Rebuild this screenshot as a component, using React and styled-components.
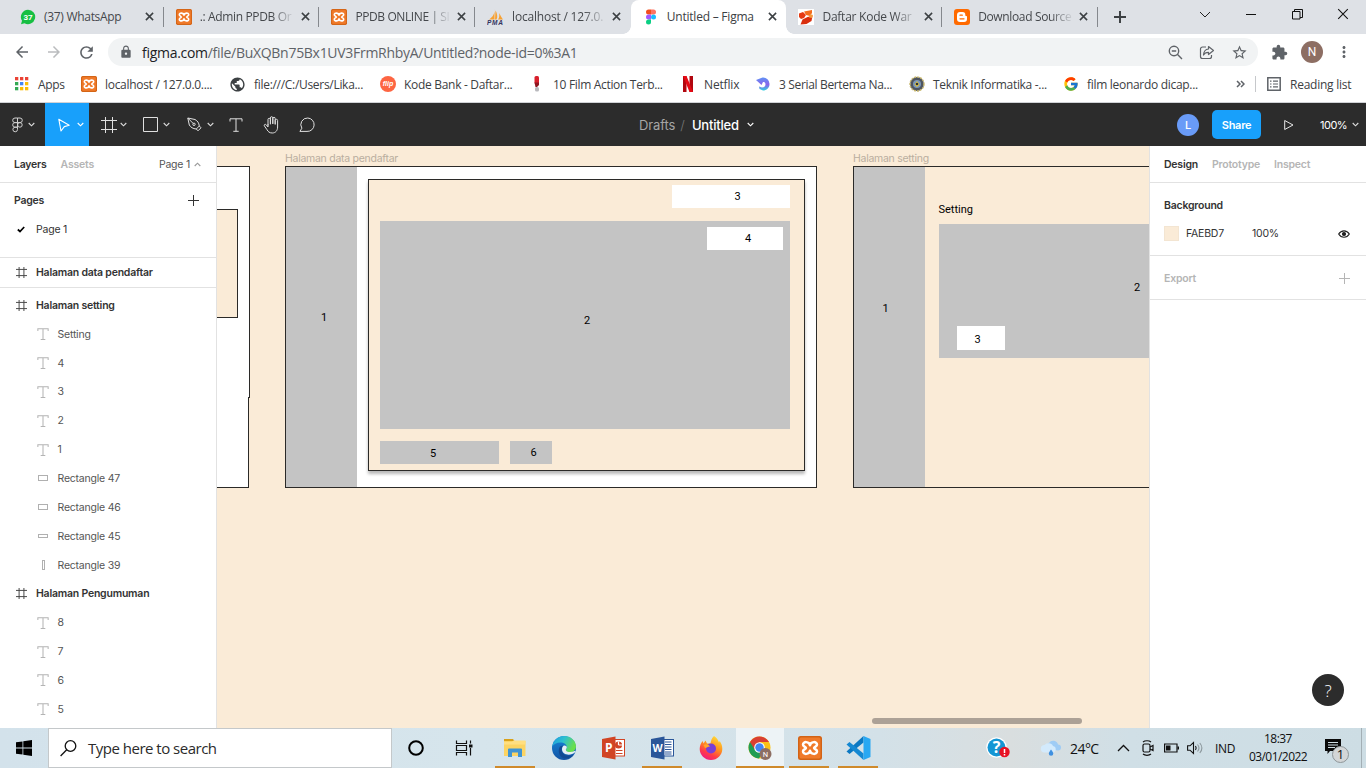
import React from "react";
import styled, { createGlobalStyle, css } from "styled-components";
import {
  MdArrowBack, MdArrowForward, MdRefresh, MdLock, MdStarBorder, MdExtension, MdMoreVert, MdPublic,
} from "react-icons/md";
import { FcGoogle } from "react-icons/fc";

const segoe = '"Open Sans", "Noto Sans", sans-serif';
const inter = 'Inter, "Liberation Sans", sans-serif';

const GlobalStyle = createGlobalStyle`
  * { box-sizing: border-box; }
  body { margin: 0; overflow: hidden; background: #fff; }
  svg { display: block; flex: none; }
`;

const Screen = styled.div`
  width: 1366px;
  height: 768px;
  display: flex;
  flex-direction: column;
  overflow: hidden;
  font-family: ${segoe};
  color: #3c4043;
`;

const Text = styled.span`
  white-space: nowrap;
  letter-spacing: ${(p) => p.$ls || 0}px;
`;

/* ---------- browser tabs ---------- */
const TabStrip = styled.div`
  height: 34px;
  flex: none;
  display: flex;
  background: #dee1e6;
  padding-left: 8px;
`;

const TabBox = styled.div`
  position: relative;
  width: 155.7px;
  flex: none;
  display: flex;
  align-items: center;
  padding: 0 6px 1px 12px;
  font-size: 12px;
  color: #45484c;
  ${(p) =>
    p.$active
      ? css`
          background: #fff;
          border-radius: 8px 8px 0 0;
          color: #3c4043;
          &::before, &::after {
            content: "";
            position: absolute;
            bottom: 0;
            width: 8px;
            height: 8px;
          }
          &::before { left: -8px; background: radial-gradient(circle at 0 0, #dee1e6 7.5px, #fff 8px); }
          &::after { right: -8px; background: radial-gradient(circle at 100% 0, #dee1e6 7.5px, #fff 8px); }
        `
      : ""}
`;

const TabTitle = styled.div`
  flex: 1;
  min-width: 0;
  margin-left: 8px;
  white-space: nowrap;
  letter-spacing: ${(p) => p.$ls}px;
  ${(p) => p.$fade && css`mask-image: linear-gradient(90deg, #000 76%, rgba(0, 0, 0, 0.12) 98%);`}
`;

const TabClose = styled.div`
  width: 16px;
  margin-left: 3px;
  display: flex;
  justify-content: center;
`;

const TabDivider = styled.div`
  width: 1px;
  height: 20px;
  margin: 7px 0 0 -1px;
  background: #85888d;
  flex: none;
`;

const NewTab = styled.div`
  width: 44px;
  display: flex;
  align-items: center;
  justify-content: center;
`;

const WindowButtons = styled.div`
  margin-left: auto;
  display: flex;
  align-items: center;
  height: 28px;
`;

const WindowButton = styled.div`
  width: 46px;
  display: flex;
  justify-content: center;
`;

/* ---------- address row ---------- */
const AddressRow = styled.div`
  height: 36px;
  flex: none;
  display: flex;
  align-items: center;
  background: #fff;
  padding: 0 12px 0 13px;
  color: #5f6368;
`;

const NavButton = styled.div`
  width: ${(p) => p.$w || 32}px;
  color: ${(p) => (p.$muted ? "#babcbe" : "#5f6368")};
`;

const UrlBar = styled.div`
  width: 1150px;
  height: 28px;
  border-radius: 14px;
  background: #f1f3f4;
  display: flex;
  align-items: center;
  padding: 0 10px 0 11px;
  font-size: 14px;
`;

const Url = styled.div`
  flex: 1;
  margin-left: 9px;
  color: #5f6368;
  letter-spacing: -0.29px;
  white-space: nowrap;
  b { font-weight: 400; color: #202124; }
`;

const UrlActions = styled.div`
  display: flex;
  gap: 16px;
  align-items: center;
`;

const ExtensionButton = styled.div`
  width: 43px;
  padding-left: 13px;
`;

const MenuDots = styled.div`
  margin-left: 12px;
`;

const Avatar = styled.div`
  width: 22px;
  height: 22px;
  border-radius: 50%;
  display: flex;
  align-items: center;
  justify-content: center;
  background: ${(p) => p.$bg};
  color: #fff;
  font: ${(p) => p.$weight || 400} ${(p) => p.$size || 12}px ${(p) => p.$font || "Roboto, sans-serif"};
`;

/* ---------- bookmarks ---------- */
const BookmarkRow = styled.div`
  height: 33px;
  flex: none;
  display: flex;
  align-items: center;
  background: #fff;
  border-bottom: 1px solid #d0d2d6;
  padding: 0 0 4px 14px;
  font-size: 12px;
`;

const BookmarkItem = styled.div`
  width: ${(p) => p.$w}px;
  flex: none;
  display: flex;
  align-items: center;
  gap: ${(p) => p.$gap || 8}px;
`;

const RowDivider = styled.div`
  width: 1px;
  height: 16px;
  background: #c6c8cb;
  margin: 0 11px 0 10px;
`;

/* ---------- editor toolbar ---------- */
const Toolbar = styled.div`
  height: 43px;
  flex: none;
  display: flex;
  align-items: center;
  background: #2c2c2c;
  font-family: ${inter};
  color: #fff;
`;

const Tool = styled.div`
  width: ${(p) => p.$w}px;
  height: 43px;
  flex: none;
  display: flex;
  align-items: center;
  padding-left: ${(p) => p.$pad}px;
  gap: ${(p) => p.$gap || 7}px;
  background: ${(p) => (p.$active ? "#18a0fb" : "transparent")};
`;

const DocTitle = styled.div`
  display: flex;
  align-items: center;
  width: 538px;
  font-size: 13px;
  color: #a5a5a5;
`;

const DocName = styled.span`
  color: #fff;
  font-weight: 500;
  margin-right: 8px;
  letter-spacing: -0.2px;
`;

const Slash = styled.span`
  color: #777;
  margin: 0 7px 0 5px;
  font-weight: 300;
`;

const ShareButton = styled.div`
  width: 49px;
  height: 29px;
  margin: 0 23px 0 13px;
  border-radius: 5px;
  background: #18a0fb;
  display: flex;
  align-items: center;
  justify-content: center;
  font-size: 11px;
  font-weight: 600;
  letter-spacing: -0.3px;
`;

const ZoomLevel = styled.div`
  display: flex;
  align-items: center;
  gap: 5px;
  margin-left: 26px;
  font-size: 11px;
  letter-spacing: -0.5px;
`;

/* ---------- work area ---------- */
const Workspace = styled.div`
  height: 582px;
  flex: none;
  display: flex;
  font-family: ${inter};
  font-size: 10.5px;
  letter-spacing: -0.22px;
  color: #333;
`;

const LeftPanel = styled.div`
  width: 217px;
  flex: none;
  background: #fff;
  border-right: 1px solid #e2e2e2;
  overflow: hidden;
`;

const PanelTabs = styled.div`
  height: 37px;
  border-bottom: 1px solid #e2e2e2;
  display: flex;
  align-items: center;
  gap: 14px;
  padding: 0 15px 0 14px;
`;

const PanelTab = styled.div`
  font-weight: 600;
  color: ${(p) => (p.$on ? "#333" : "#b5b5b5")};
`;

const PageChoice = styled.div`
  margin-left: auto;
  display: flex;
  align-items: center;
  gap: 4px;
  color: #555;
`;

const PagesSection = styled.div`
  height: 75px;
  border-bottom: 1px solid #e2e2e2;
  padding: 5px 17px 0 14px;
`;

const SectionHead = styled.div`
  height: 24px;
  display: flex;
  align-items: center;
  justify-content: space-between;
  font-weight: 600;
  color: ${(p) => (p.$muted ? "#b5b5b5" : "#333")};
`;

const PageRow = styled.div`
  height: 34px;
  display: flex;
  align-items: center;
  gap: 11px;
  padding-left: 3px;
`;

const StickyFrame = styled.div`
  height: 30px;
  border-bottom: 1px solid #e2e2e2;
  margin-bottom: 3px;
`;

const LayerRow = styled.div`
  height: ${(p) => p.$h || 28.85}px;
  display: flex;
  align-items: center;
  padding-left: ${(p) => (p.$frame ? 16 : 37)}px;
  gap: ${(p) => (p.$frame ? 9 : 8.5)}px;
  font-weight: ${(p) => (p.$frame ? 600 : 400)};
  color: ${(p) => (p.$frame ? "#333" : "#555")};
`;

const Canvas = styled.div`
  position: relative;
  width: 932px;
  flex: none;
  background: #faebd7;
  overflow: hidden;
  font-family: Roboto, sans-serif;
  letter-spacing: 0;
`;

const Shape = styled.div`
  position: absolute;
  left: ${(p) => p.$x}px;
  top: ${(p) => p.$y}px;
  width: ${(p) => p.$w}px;
  height: ${(p) => p.$h}px;
  background: ${(p) => p.$fill};
  ${(p) => p.$line && css`border: 1px solid #2b2a28;`}
  ${(p) => p.$shadow && css`box-shadow: 0 3px 3px rgba(0, 0, 0, 0.28);`}
`;

const CanvasText = styled.div`
  position: absolute;
  left: ${(p) => p.$x}px;
  top: ${(p) => p.$y}px;
  line-height: 14px;
  font-size: 11px;
  color: #000;
  white-space: nowrap;
`;

const FrameLabel = styled(CanvasText)`
  font-family: ${inter};
  font-size: 10.5px;
  letter-spacing: -0.27px;
  color: #b9ae9f;
`;

const ScrollThumb = styled.div`
  position: absolute;
  left: 655px;
  top: 572px;
  width: 210px;
  height: 6px;
  border-radius: 3px;
  background: #aca196;
`;

const RightPanel = styled.div`
  position: relative;
  flex: 1;
  background: #fff;
  border-left: 1px solid #e2e2e2;
`;

const PropSection = styled.div`
  height: ${(p) => p.$h}px;
  border-bottom: 1px solid #e2e2e2;
  padding: 10px 16px 0 14px;
`;

const FillRow = styled.div`
  height: 33px;
  display: flex;
  align-items: center;
`;

const Swatch = styled.div`
  width: 15px;
  height: 15px;
  background: #faebd7;
  border: 1px solid #f3e5d2;
  margin-right: 7px;
`;

const HexValue = styled.div`
  width: 66px;
`;

const FillAlpha = styled.div`
  flex: 1;
`;

const HelpButton = styled.div`
  position: absolute;
  right: 22px;
  bottom: 22px;
  width: 32px;
  height: 32px;
  border-radius: 50%;
  background: #2c2c2c;
  display: flex;
  align-items: center;
  justify-content: center;
  color: #fff;
  font-family: "Open Sans", sans-serif;
  font-size: 17px;
  font-weight: 300;
`;

/* ---------- taskbar ---------- */
const Taskbar = styled.div`
  height: 40px;
  flex: none;
  display: flex;
  background: linear-gradient(90deg, #d3e2eb 0, #d6e5ec 480px, #d3e1e8 880px, #d9dedf 1010px, #d0dfe6 1130px, #cddde4 100%);
  color: #101010;
`;

const StartButton = styled.div`
  width: 48px;
  display: flex;
  align-items: center;
  justify-content: center;
`;

const SearchBox = styled.div`
  width: 344px;
  border: 1px solid #c4c8ca;
  background: #fff;
  display: flex;
  align-items: center;
  padding-left: 11px;
  gap: 11px;
  font-size: 15px;
  color: #2b2b2b;
`;

const TaskCell = styled.div`
  width: ${(p) => p.$w || 49}px;
  height: 40px;
  margin-right: ${(p) => p.$mr || 0}px;
  display: flex;
  align-items: center;
  justify-content: center;
  background: ${(p) => (p.$focus ? "#edf3f6" : "transparent")};
  position: relative;
  &::after {
    content: "";
    position: absolute;
    bottom: 0;
    left: ${(p) => (p.$focus ? 0 : 4)}px;
    right: ${(p) => (p.$focus ? 0 : 5)}px;
    height: 2px;
    background: ${(p) => (p.$open ? "#cf8a2b" : "transparent")};
  }
`;

const Tray = styled.div`
  margin-left: auto;
  display: flex;
  align-items: center;
  font-size: 12px;
`;

const TraySlot = styled.div`
  width: ${(p) => p.$w}px;
  display: flex;
  align-items: center;
  font-size: ${(p) => p.$fs || 12}px;
`;

const Clock = styled.div`
  width: 62px;
  text-align: center;
  line-height: 18px;
  letter-spacing: -0.55px;
  white-space: nowrap;
`;

const NoticeSlot = styled.div`
  width: 52px;
  padding: 6px 0 0 16px;
`;

const ShowDesktop = styled.div`
  width: 5px;
  height: 40px;
  border-left: 1px solid #a3afb5;
`;

/* ---------- drawings ---------- */
const Cross = ({ s = 9, w = 1.7, c = "#3c4043" }) => (
  <svg width={s} height={s} viewBox="0 0 10 10" stroke={c} strokeWidth={w}>
    <path d="M1 1l8 8M9 1l-8 8" />
  </svg>
);

const Plus = ({ s = 11, w = 1, c = "#333" }) => (
  <svg width={s} height={s} viewBox="0 0 11 11" stroke={c} strokeWidth={w}>
    <path d="M5.5 0v11M0 5.5h11" />
  </svg>
);

const Chevron = ({ c = "#ddd", up }) => (
  <svg width="7" height="5" viewBox="0 0 7 5" fill="none" stroke={c} strokeWidth="1.1">
    <path d={up ? "M.7 4L3.5 1.2 6.3 4" : "M.7 1L3.5 3.8 6.3 1"} />
  </svg>
);

const Xampp = ({ s = 16 }) => (
  <svg width={s} height={s} viewBox="0 0 24 24">
    <rect width="24" height="24" rx="2.5" fill="#d9641a" />
    <rect x="1" y="1" width="22" height="22" rx="2" fill="#f07a2a" stroke="#c9600f" strokeWidth=".8" />
    <path
      d="M12 9.300C11.500 5.500 5 4.800 5 8.800c0 1.800 2.400 1.800 2.900 3.200C7.400 13.400 5 13.400 5 15.200c0 4 6.500 3.300 7-.5c.5 3.800 7 4.500 7 .5c0-1.800-2.400-1.800-2.900-3.200c.5-1.400 2.900-1.400 2.900-3.200c0-4-6.500-3.300-7 .5z"
      fill="none" stroke="#fff" strokeWidth="2.500" strokeLinejoin="round"
    />
  </svg>
);

const WhatsApp = () => (
  <svg width="16" height="16" viewBox="0 0 16 16">
    <path d="M8 .8a7.200 7.200 0 1 1-3.500 13.500L1 15.200l1-3.400A7.200 7.200 0 0 1 8 .8z" fill="#17bf43" />
    <text x="8" y="10.900" fontSize="8" fontWeight="700" fill="#fff" textAnchor="middle" fontFamily="Roboto">37</text>
  </svg>
);

const Pma = () => (
  <svg width="17" height="16" viewBox="0 0 17 16">
    <path d="M7.500 0C8 4 6 8 2 10.500h5.500zM8.500 1.500C10 4 11 8 9.500 10.500H8zM12 4c1.500 2.500 3 5 4 6.500h-5c1.500-2 1.500-4.500 1-6.500z" fill="#f7a133" />
    <text x="0" y="15.800" fontSize="6.500" fontWeight="700" fontStyle="italic" fill="#33335e" fontFamily="Liberation Sans" textLength="16">PMA</text>
  </svg>
);

const FigmaColor = () => (
  <svg width="16" height="16" viewBox="0 0 16 16">
    <path d="M5.500.5H8v5H5.500a2.500 2.500 0 0 1 0-5z" fill="#f24e1e" />
    <path d="M8 .5h2.500a2.500 2.500 0 0 1 0 5H8z" fill="#ff7262" />
    <path d="M5.500 5.500H8v5H5.500a2.500 2.500 0 0 1 0-5z" fill="#a259ff" />
    <circle cx="10.500" cy="8" r="2.500" fill="#1abcfe" />
    <path d="M5.500 10.500H8V13a2.500 2.500 0 1 1-2.500-2.500z" fill="#0acf83" />
  </svg>
);

const Slides = () => (
  <svg width="16" height="16" viewBox="0 0 16 16">
    <rect width="16" height="16" fill="#fff" />
    <path d="M1 4.500l4-1.500 3 3-2 3-3 1-2-2z" fill="#e63a12" />
    <path d="M6 2.500L14 1v3l-2 3-4-1z" fill="#f36c1d" />
    <path d="M4.500 10.500l5-2.500 5-1-1 5-5 3-6 .5z" fill="#d92e0d" />
    <path d="M12 5l3 1-1 3-3-.5z" fill="#f59a3d" />
  </svg>
);

const Blogger = () => (
  <svg width="16" height="16" viewBox="0 0 16 16">
    <rect width="16" height="16" rx="3" fill="#ff6a00" />
    <path d="M6 3h2.500A2.800 2.800 0 0 1 11.300 6c0 .8.300 1 1 1 .5 0 .7.300.7.700V10a3 3 0 0 1-3 3H6a3 3 0 0 1-3-3V6a3 3 0 0 1 3-3z" fill="#fff" />
    <path d="M6 6.200h2.300M6 9.800h4" stroke="#ff6a00" strokeWidth="1.300" strokeLinecap="round" />
  </svg>
);

const AppsGrid = () => (
  <svg width="16" height="16" viewBox="0 0 16 16">
    {["#ea4335", "#ea4335", "#ea4335", "#34a853", "#4285f4", "#fbbc04", "#34a853", "#fbbc04", "#fbbc04"].map((c, i) => (
      <rect key={i} x={1 + (i % 3) * 5} y={1 + Math.floor(i / 3) * 5} width="3.300" height="3.300" fill={c} />
    ))}
  </svg>
);

const Flip = () => (
  <svg width="16" height="16" viewBox="0 0 16 16">
    <circle cx="8" cy="8" r="8" fill="#fd6542" />
    <text x="8" y="10.300" fontSize="7" fontStyle="italic" fontWeight="700" fill="#fff" textAnchor="middle" fontFamily="Liberation Sans">flip</text>
  </svg>
);

const Exclaim = () => (
  <svg width="16" height="16" viewBox="0 0 16 16">
    <rect x="5.500" y="0" width="4.500" height="8" rx="1.500" fill="#d8202c" />
    <path d="M5.500 6.500H10V9L8 11H6.500z" fill="#8e1620" />
    <rect x="6" y="11" width="4" height="4.500" rx="1.500" fill="#b9b9bd" />
  </svg>
);

const Netflix = () => (
  <svg width="16" height="16" viewBox="0 0 16 16">
    <path d="M3 0h3.500v16H3zM9.500 0H13v16H9.500z" fill="#b1060f" />
    <path d="M3 0h3.500L13 16H9.500z" fill="#e50914" />
  </svg>
);

const Swirl = () => (
  <svg width="16" height="16" viewBox="0 0 16 16">
    <defs>
      <linearGradient id="swirl" x1="0" y1="0" x2="0" y2="1">
        <stop offset="0" stopColor="#5f93f5" />
        <stop offset=".55" stopColor="#8a63ea" />
        <stop offset="1" stopColor="#31cfe0" />
      </linearGradient>
    </defs>
    <path d="M1 4L7.500 1.500A6.300 6.300 0 0 1 14.500 8c0 4-3 6.500-6.500 6.500L4.500 13 4 10.500l3 1c2.500 0 3.500-1.500 3.500-3.200S9.500 6 8 6L6.500 9z" fill="url(#swirl)" />
  </svg>
);

const Seal = () => (
  <svg width="16" height="16" viewBox="0 0 16 16">
    <circle cx="8" cy="8" r="7" fill="#4e5560" stroke="#c9b76b" strokeWidth="1.400" strokeDasharray="2 1" />
    <circle cx="8" cy="8" r="4" fill="#7a96b8" />
    <path d="M5.500 8.500L8 5l2.500 3.500L8 11z" fill="#e2c33b" />
    <circle cx="8" cy="8" r="1.300" fill="#2d3238" />
  </svg>
);

const ReadingList = () => (
  <svg width="14" height="14" viewBox="0 0 14 14" fill="none" stroke="#5f6368" strokeWidth="1.500">
    <path d="M.8.8h12.400v12.400H.8z" />
    <path d="M3 4.200h1.500M3 7h1.500M3 9.800h1.500M6 4.200h5M6 7h5M6 9.800h5" strokeWidth="1.200" />
  </svg>
);

const ZoomOut = () => (
  <svg width="15" height="15" viewBox="0 0 15 15" fill="none" stroke="#5f6368" strokeWidth="1.400">
    <circle cx="6" cy="6" r="4.700" /><path d="M9.300 9.300L14 14M3.800 6h4.400" />
  </svg>
);

const ShareArrow = () => (
  <svg width="16" height="15" viewBox="0 0 16 15" fill="none" stroke="#5f6368" strokeWidth="1.200">
    <path d="M7 2H3.500A2 2 0 0 0 1.500 4v7.500a2 2 0 0 0 2 2h7a2 2 0 0 0 2-2V10" />
    <path d="M9.500 1.500L14.500 5.500 9.500 9.500V7.300C7 7.300 5.500 8 4.500 10c.2-3.500 2-5.700 5-6z" strokeLinejoin="round" />
  </svg>
);

const FigmaOutline = () => (
  <svg width="11" height="16" viewBox="0 0 11 16" fill="none" stroke="#cfcfcf" strokeWidth="1">
    <path d="M5.500 1H3a2.300 2.300 0 0 0 0 4.600h2.500zM5.500 1H8a2.300 2.300 0 0 1 0 4.600H5.500zM5.500 5.600H3a2.300 2.300 0 0 0 0 4.600h2.500zM5.500 10.200H3a2.300 2.300 0 1 0 2.500 2.300z" />
    <circle cx="7.900" cy="7.900" r="2.300" />
  </svg>
);

const Cursor = () => (
  <svg width="12" height="14" viewBox="0 0 12 14" fill="none" stroke="#fff" strokeWidth="1.100" strokeLinejoin="round">
    <path d="M.8 1.200l10.400 6L6.300 8.600 3 13z" />
  </svg>
);

const FrameIcon = ({ s = 16, c = "#e0e0e0", w = 1 }) => (
  <svg width={s} height={s} viewBox="0 0 16 16" stroke={c} strokeWidth={w}>
    <path d="M4.500 0v16M11.500 0v16M0 3.500h16M0 12.500h16" />
  </svg>
);

const Pen = () => (
  <svg width="15" height="15" viewBox="0 0 15 15" fill="none" stroke="#e0e0e0" strokeWidth="1" strokeLinejoin="round">
    <path d="M.8 1L8 2.500C10.500 3.800 12 6 12.300 9L9.300 12C6 11.800 3.500 10.200 2.300 8z" />
    <path d="M.8 1l5.400 5.500M12.300 9l1.700 1.800-3 3L9.300 12" /><circle cx="7" cy="7.300" r="1.200" />
  </svg>
);

const TypeIcon = ({ s = 14, c = "#e0e0e0", w = 1 }) => (
  <svg width={s} height={s} viewBox="0 0 14 14" fill="none" stroke={c} strokeWidth={w}>
    <path d="M1 3.500V.8h12v2.700M7 .8v12.500M4.300 13.300h5.400" />
  </svg>
);

const Hand = () => (
  <svg width="17" height="18" viewBox="0 0 17 18" fill="none" stroke="#e0e0e0" strokeWidth="1" strokeLinecap="round" strokeLinejoin="round">
    <path d="M5 9V3.500a1.200 1.200 0 0 1 2.400 0V8M7.400 7.500V1.900a1.200 1.200 0 0 1 2.400 0V7.500M9.800 7.500V2.500a1.200 1.200 0 0 1 2.400 0V8M12.200 8V4.500a1.200 1.200 0 0 1 2.400 0v6.500c0 3.500-2 6-5.300 6-3 0-4.300-1.500-5.300-3.300L1.300 9.800c-.6-1.200 1-2 1.900-1L5 11V8.500" />
  </svg>
);

const Comment = () => (
  <svg width="16" height="16" viewBox="0 0 16 16" fill="none" stroke="#e0e0e0" strokeWidth="1">
    <path d="M8.800 1a6.600 6.600 0 1 1-.8 13.400H.9l2-3.200A6.600 6.600 0 0 1 8.800 1z" strokeLinejoin="round" />
  </svg>
);

const glyphRects = {
  wide: [1.5, 3.5, 9, 5],
  slim: [1.5, 4.5, 9, 3],
  tall: [5.5, 1.5, 2, 9],
};

const LayerGlyph = ({ kind }) => {
  if (kind === "T") return <TypeIcon s={12} c="#b4b4b4" w={1.2} />;
  const [x, y, w, h] = glyphRects[kind];
  return (
    <svg width="12" height="12" viewBox="0 0 12 12" fill="none" stroke="#b0b0b0">
      <rect x={x} y={y} width={w} height={h} />
    </svg>
  );
};

const Eye = () => (
  <svg width="12" height="10" viewBox="0 0 12 10" fill="none" stroke="#222" strokeWidth="1.200">
    <path d="M.7 5C3.200.7 8.800.7 11.300 5 8.800 9.300 3.200 9.300.7 5z" /><circle cx="6" cy="5" r="1.500" fill="#222" />
  </svg>
);

const WinLogo = () => (
  <svg width="16" height="16" viewBox="0 0 16 16" fill="#000">
    <path d="M0 2.300L6.500 1.400V7.600H0zM7.300 1.300L16 0V7.600H7.300zM0 8.400h6.500v6.200L0 13.700zM7.300 8.400H16V16L7.300 14.700z" />
  </svg>
);

const Explorer = () => (
  <svg width="22" height="20" viewBox="0 0 22 20">
    <path d="M0 1h9l1.500 2H0z" fill="#d9a11a" />
    <path d="M0 3h21.500v15H0z" fill="#fcd462" />
    <path d="M0 4h8l1.500-1.500H21.500v4H0z" fill="#ffdf81" />
    <path d="M4 19v-7.500a1 1 0 0 1 1-1h12a1 1 0 0 1 1 1V19h-4v-4.500H8V19z" fill="#3f94d3" />
  </svg>
);

const Edge = () => (
  <svg width="24" height="24" viewBox="0 0 24 24">
    <defs>
      <linearGradient id="edgeTop" x1="0" y1="0" x2="1" y2=".4">
        <stop offset="0" stopColor="#1a9be0" /><stop offset=".5" stopColor="#2fc0cf" /><stop offset="1" stopColor="#6adf4c" />
      </linearGradient>
      <linearGradient id="edgeLow" x1="0" y1="0" x2="0" y2="1">
        <stop offset="0" stopColor="#1687d9" /><stop offset="1" stopColor="#1253a4" />
      </linearGradient>
    </defs>
    <circle cx="12" cy="12" r="12" fill="url(#edgeLow)" />
    <path d="M.2 10.500C1.500 4 6.500 0 12.200 0 19 0 24 5 24 10.500c0 3.500-2.800 5.800-6.200 5.800-3 0-4.300-1-4.300-2 0-.8 1.300-1.300 1.300-3.200C14.800 8.500 12 6.500 8.500 6.500 4.500 6.500 1.500 8.500.2 10.500z" fill="url(#edgeTop)" />
    <path d="M8 10.500c-2.500 4-1 9.500 3 11.500 3.500 1.500 8 0 10.500-3.500-4 2-8.500 1.500-10.700-1.300C9 15 9.500 11.500 11 9.500z" fill="#124a93" />
    <path d="M11.300 10c-1.800 1.800-1.800 5.300.7 7.300 3 2.200 8 2 11.300-1.300.6-.5-.2-1.200-.8-.9-3.500 1.800-8.900 1-8.700-1.300.3-1 1.100-1.500 1-2.500-.1-1.200-2-2.400-3.500-1.300z" fill="#e6eff4" />
  </svg>
);

const OfficeIcon = ({ c, letter }) => (
  <svg width="23" height="24" viewBox="0 0 23 24">
    <rect x="11" y="3.500" width="11.500" height="16.500" fill="#fff" stroke={c} strokeWidth="1" />
    {letter === "W" ? (
      <path d="M14 6h6.500M14 8.500h6.500M14 11h6.500M14 13.500h6.500M14 16h6.500M14 18h6.500" stroke={c} strokeWidth="1.200" />
    ) : (
      <g stroke={c} strokeWidth="1.200" fill="none">
        <circle cx="16.500" cy="9" r="3" fill={c} /><path d="M16.500 9V5.500M16.500 9h4" stroke="#fff" /><path d="M14 14.500h6.500M14 17.500h6.500" />
      </g>
    )}
    <path d="M0 3L13.500.5v23L0 21z" fill={c} />
    <text x="6.700" y="16" fontSize={letter === "W" ? 10.5 : 12} fontWeight="700" fill="#fff" textAnchor="middle" fontFamily="Open Sans">{letter}</text>
  </svg>
);

const Firefox = () => (
  <svg width="24" height="24" viewBox="0 0 24 24">
    <defs>
      <linearGradient id="fox" x1=".8" y1="0" x2=".3" y2="1">
        <stop offset="0" stopColor="#ffe13a" /><stop offset=".45" stopColor="#ff8f1e" /><stop offset=".75" stopColor="#ff3a4a" /><stop offset="1" stopColor="#ee1a80" />
      </linearGradient>
    </defs>
    <path d="M15 0c3 2 4 4 5 6.500l.7-1.500C22.500 7.500 23.300 10 23.300 13c0 6-5 11-11.300 11S.7 19 .7 13c0-3 1-6 3-8l.8 2.500L6.500 4.500 8 7.500h3.500C12 5 12.500 2 15 0z" fill="url(#fox)" />
    <circle cx="12" cy="12.500" r="5" fill="#7a3fd6" />
    <path d="M4.500 9c2-1.500 5-1 6.500 1.500-2.500 0-3 1.500-5 1.500z" fill="#ffa72b" />
  </svg>
);

const ChromeIcon = () => (
  <svg width="24" height="24" viewBox="0 0 24 24">
    <circle cx="11.500" cy="11.500" r="11" fill="#fbc116" />
    <path d="M11.500 11.500L2 6A11 11 0 0 0 11 22.500l5-8.500z" fill="#1f9d53" />
    <path d="M2 6A11 11 0 0 1 21 6H11.500L7 14z" fill="#d93f33" />
    <circle cx="11.500" cy="11.500" r="5.300" fill="#fff" />
    <circle cx="11.500" cy="11.500" r="4.200" fill="#4285f4" />
    <circle cx="17.500" cy="18" r="6" fill="#8d6e63" />
    <text x="17.500" y="20.700" fontSize="7.500" fill="#fff" textAnchor="middle" fontFamily="Roboto">N</text>
  </svg>
);

const VsCode = () => (
  <svg width="25" height="24" viewBox="0 0 25 24">
    <path d="M17.500 0v6.500L3.500 18 .5 15.500z" fill="#0b78c2" />
    <path d="M17.500 24v-6.500L3.500 6 .5 8.500z" fill="#1488d2" />
    <path d="M17.500 0L24.500 3v18l-7 3z" fill="#29a8f2" />
  </svg>
);

const TaskView = () => (
  <svg width="18" height="16" viewBox="0 0 18 16" fill="none" stroke="#111" strokeWidth="1.200">
    <path d="M1.500.5v3h10v-3M1.500 15.500v-3h10v3M1.500 5.500h10v5h-10zM15.500.5v3M15.500 8v7.500" />
    <path d="M14 4.500h3.500v3H14z" fill="#111" stroke="none" />
  </svg>
);

const HelpBadge = () => (
  <svg width="24" height="22" viewBox="0 0 24 22">
    <circle cx="10.500" cy="10.500" r="10.300" fill="#fff" /><circle cx="10.500" cy="10.500" r="9" fill="#1496d4" />
    <text x="10.500" y="16.300" fontSize="16" fontWeight="700" fill="#fff" textAnchor="middle" fontFamily="Open Sans">?</text>
    <circle cx="18.500" cy="15" r="5.200" fill="#e81123" />
    <path d="M18.500 12v4M18.500 17v1.400" stroke="#fff" strokeWidth="1.500" />
  </svg>
);

const Weather = () => (
  <svg width="22" height="16" viewBox="0 0 22 16">
    <path d="M8 9a3.500 3.500 0 0 1 1-6 5 5 0 0 1 9 1.500 3 3 0 0 1 0 6z" fill="#9fccf5" />
    <path d="M4.500 12.500a3.700 3.700 0 0 1 0-7.400A5 5 0 0 1 13 6a3.300 3.300 0 0 1 0 6.500z" fill="#d3eafc" />
    <path d="M11 9.500c1.500 2 2.300 3 2.300 4a2.200 2.200 0 0 1-4.500 0c0-1 .9-2 2.200-4z" fill="#3f90e0" />
  </svg>
);

const TrayCaret = () => (
  <svg width="13" height="8" viewBox="0 0 13 8" fill="none" stroke="#111" strokeWidth="1.300"><path d="M1 7l5.500-5.500L12 7" /></svg>
);

const MeetNow = () => (
  <svg width="12" height="16" viewBox="0 0 12 16" fill="none" stroke="#111" strokeWidth="1.200">
    <rect x="1" y="4" width="7" height="8" rx="1.500" /><path d="M8 7l3-1.500v5L8 9M1 2c2-1.700 6-1.700 8 0M1 14c2 1.700 6 1.700 8 0" />
  </svg>
);

const Battery = () => (
  <svg width="15" height="10" viewBox="0 0 15 10">
    <path d="M.6 1h12.400v8H.6z" fill="none" stroke="#111" strokeWidth="1.200" />
    <path d="M2 2.500h4.500v5H2zM13.500 3.500H15v3h-1.500z" fill="#111" />
  </svg>
);

const Speaker = () => (
  <svg width="17" height="14" viewBox="0 0 17 14" fill="none" stroke="#111" strokeWidth="1.100">
    <path d="M.6 4.800h2.400L6.500 1.500v11L3 9.200H.6zM8.500 5c.8 1.200.8 2.800 0 4" />
    <path d="M10.500 3.500c1.700 2 1.700 5 0 7M12.800 2c2.500 3 2.500 7 0 10" stroke="#8d989d" />
  </svg>
);

const ActionCenter = () => (
  <svg width="25" height="26" viewBox="0 0 25 26">
    <path d="M0 1h16v12H5l-2.500 3v-3H0z" fill="#0a0a0a" />
    <path d="M3 4.500h10M3 7h10M3 9.500h7" stroke="#cfdde4" strokeWidth="1" />
    <circle cx="15.500" cy="16.500" r="8" fill="#d3d6d7" stroke="#8f9699" strokeWidth="1" />
    <text x="15.500" y="21" fontSize="13" fill="#111" textAnchor="middle" fontFamily="Open Sans">1</text>
  </svg>
);

/* ---------- data ---------- */
const tabs = [
  { icon: <WhatsApp />, title: "(37) WhatsApp", ls: -0.3 },
  { icon: <Xampp />, title: ".: Admin PPDB Or", fade: true, ls: -0.35 },
  { icon: <Xampp />, title: "PPDB ONLINE | SI", fade: true, ls: -0.4 },
  { icon: <Pma />, title: "localhost / 127.0.", fade: true, ls: -0.2, bare: true },
  { icon: <FigmaColor />, title: "Untitled – Figma", active: true, ls: -0.22, bare: true },
  { icon: <Slides />, title: "Daftar Kode War", fade: true, ls: -0.25 },
  { icon: <Blogger />, title: "Download Source", fade: true, ls: -0.35 },
];

const bookmarks = [
  [<AppsGrid />, "Apps", 67, -0.3],
  [<Xampp />, "localhost / 127.0.0....", 148, -0.3],
  [<MdPublic size={17} color="#3c4043" />, "file:///C:/Users/Lika...", 151, -0.3],
  [<Flip />, "Kode Bank - Daftar...", 149, -0.3],
  [<Exclaim />, "10 Film Action Terb...", 151, -0.32],
  [<Netflix />, "Netflix", 75, -0.15],
  [<Swirl />, "3 Serial Bertema Na...", 154, -0.34],
  [<Seal />, "Teknik Informatika -...", 154, -0.3],
  [<FcGoogle size={16} />, "film leonardo dicap...", 173, -0.3],
];

const layers = [
  ["frame", "Halaman setting"], ["T", "Setting"], ["T", "4"], ["T", "3"], ["T", "2"], ["T", "1"],
  ["wide", "Rectangle 47"], ["wide", "Rectangle 46"], ["slim", "Rectangle 45"], ["tall", "Rectangle 39"],
  ["frame", "Halaman Pengumuman"], ["T", "8"], ["T", "7"], ["T", "6"], ["T", "5"],
];

const GREY = "#c4c4c4";
const BEIGE = "#faebd7";

function BrowserChrome() {
  return (
    <>
      <TabStrip>
        {tabs.map((t, i) => (
          <React.Fragment key={i}>
            <TabBox $active={t.active}>
              {t.icon}
              <TabTitle $fade={t.fade} $ls={t.ls}>{t.title}</TabTitle>
              <TabClose><Cross /></TabClose>
            </TabBox>
            {!t.bare && <TabDivider />}
          </React.Fragment>
        ))}
        <NewTab><Plus s={12} w={1.8} c="#3c4043" /></NewTab>
        <WindowButtons>
          <WindowButton>
            <svg width="12" height="7" viewBox="0 0 12 7" fill="none" stroke="#222"><path d="M1 1l5 5 5-5" /></svg>
          </WindowButton>
          <WindowButton>
            <svg width="10" height="1" viewBox="0 0 10 1"><rect width="10" height="1" fill="#111" /></svg>
          </WindowButton>
          <WindowButton>
            <svg width="11" height="11" viewBox="0 0 11 11" fill="none" stroke="#111"><path d="M.5 2.500h7.500v7.500H.5zM2.500 2.500V.5h8v8H8" /></svg>
          </WindowButton>
          <WindowButton><Cross s={12} w={0.9} c="#111" /></WindowButton>
        </WindowButtons>
      </TabStrip>
      <AddressRow>
        <NavButton><MdArrowBack size={18} /></NavButton>
        <NavButton $muted><MdArrowForward size={18} /></NavButton>
        <NavButton $w={31}><MdRefresh size={19} /></NavButton>
        <UrlBar>
          <MdLock size={14} />
          <Url><b>figma.com</b>/file/BuXQBn75Bx1UV3FrmRhbyA/Untitled?node-id=0%3A1</Url>
          <UrlActions><ZoomOut /><ShareArrow /><MdStarBorder size={17} /></UrlActions>
        </UrlBar>
        <ExtensionButton><MdExtension size={17} /></ExtensionButton>
        <Avatar $bg="#8d6e63">N</Avatar>
        <MenuDots><MdMoreVert size={18} /></MenuDots>
      </AddressRow>
      <BookmarkRow>
        {bookmarks.map(([icon, name, w, ls], i) => (
          <BookmarkItem key={i} $w={w}>{icon}<Text $ls={ls}>{name}</Text></BookmarkItem>
        ))}
        <svg width="9" height="8" viewBox="0 0 9 8" fill="none" stroke="#5f6368" strokeWidth="1.500"><path d="M1 1l3 3-3 3M5 1l3 3-3 3" /></svg>
        <RowDivider />
        <BookmarkItem $w={95} $gap={9}><ReadingList /><Text $ls={-0.25}>Reading list</Text></BookmarkItem>
      </BookmarkRow>
    </>
  );
}

function EditorToolbar() {
  return (
    <Toolbar>
      <Tool $w={45} $pad={12} $gap={5}><FigmaOutline /><Chevron /></Tool>
      <Tool $w={44} $pad={13} $active><Cursor /><Chevron c="#fff" /></Tool>
      <Tool $w={54} $pad={12} $gap={3}><FrameIcon /><Chevron /></Tool>
      <Tool $w={44} $pad={0} $gap={5}>
        <svg width="15" height="15" viewBox="0 0 15 15" fill="none" stroke="#e0e0e0"><path d="M.5.5h14v14H.5z" /></svg>
        <Chevron />
      </Tool>
      <Tool $w={42} $pad={0} $gap={5}><Pen /><Chevron /></Tool>
      <Tool $w={34} $pad={0}><TypeIcon /></Tool>
      <Tool $w={36} $pad={0}><Hand /></Tool>
      <Tool $w={340} $pad={0}><Comment /></Tool>
      <DocTitle>
        <Text $ls={-0.1}>Drafts</Text><Slash>/</Slash><DocName>Untitled</DocName><Chevron c="#fff" />
      </DocTitle>
      <Avatar $bg="#699bf7" $font="Inter" $size={11} $weight={500}>L</Avatar>
      <ShareButton>Share</ShareButton>
      <svg width="10" height="12" viewBox="0 0 10 12" fill="none" stroke="#e8e8e8"><path d="M.7 1.500L9 6 .7 10.500z" /></svg>
      <ZoomLevel>100%<Chevron /></ZoomLevel>
    </Toolbar>
  );
}

function Layers() {
  return (
    <LeftPanel>
      <PanelTabs>
        <PanelTab $on>Layers</PanelTab>
        <PanelTab>Assets</PanelTab>
        <PageChoice>Page 1<Chevron up c="#999" /></PageChoice>
      </PanelTabs>
      <PagesSection>
        <SectionHead>Pages<Plus /></SectionHead>
        <PageRow>
          <svg width="8" height="7" viewBox="0 0 8 7" fill="none" stroke="#000" strokeWidth="1.700"><path d="M.8 3.500L3 5.500 7.200 1" /></svg>
          Page 1
        </PageRow>
      </PagesSection>
      <StickyFrame>
        <LayerRow $frame $h={28.5}><FrameIcon s={11} c="#444" w={1.4} />Halaman data pendaftar</LayerRow>
      </StickyFrame>
      {layers.map(([kind, name], i) => (
        <LayerRow key={i} $frame={kind === "frame"}>
          {kind === "frame" ? <FrameIcon s={11} c="#444" w={1.4} /> : <LayerGlyph kind={kind} />}
          {name}
        </LayerRow>
      ))}
    </LeftPanel>
  );
}

function Board() {
  return (
    <Canvas>
      <Shape $x={-40} $y={20} $w={73} $h={232} $fill="#fff" $line />
      <Shape $x={-40} $y={252} $w={72} $h={90} $fill="#fff" $line />
      <Shape $x={-30} $y={240} $w={61} $h={20} $fill="#fff" />
      <Shape $x={-20} $y={63} $w={41} $h={109} $fill={BEIGE} $line />

      <FrameLabel $x={68} $y={6}>Halaman data pendaftar</FrameLabel>
      <Shape $x={68} $y={20} $w={532} $h={322} $fill="#fff" $line />
      <Shape $x={69} $y={21} $w={71} $h={320} $fill={GREY} />
      <Shape $x={151} $y={33} $w={437} $h={292} $fill={BEIGE} $line $shadow />
      <Shape $x={455} $y={38.5} $w={118} $h={23.5} $fill="#fff" />
      <Shape $x={163} $y={75} $w={410} $h={208} $fill={GREY} />
      <Shape $x={490} $y={81} $w={76} $h={23} $fill="#fff" />
      <Shape $x={163} $y={295} $w={119} $h={23} $fill={GREY} />
      <Shape $x={293} $y={295} $w={42} $h={23} $fill={GREY} />
      <CanvasText $x={104} $y={165}>1</CanvasText>
      <CanvasText $x={367} $y={168}>2</CanvasText>
      <CanvasText $x={517.5} $y={44}>3</CanvasText>
      <CanvasText $x={528} $y={86}>4</CanvasText>
      <CanvasText $x={213} $y={301}>5</CanvasText>
      <CanvasText $x={313.5} $y={300}>6</CanvasText>

      <FrameLabel $x={636} $y={6}>Halaman setting</FrameLabel>
      <Shape $x={636} $y={20} $w={533} $h={322} $fill={BEIGE} $line />
      <Shape $x={637} $y={21} $w={71} $h={320} $fill={GREY} />
      <CanvasText $x={721.5} $y={57}>Setting</CanvasText>
      <Shape $x={722} $y={78} $w={300} $h={134} $fill={GREY} />
      <Shape $x={740} $y={180} $w={48} $h={24} $fill="#fff" />
      <CanvasText $x={665.5} $y={156}>1</CanvasText>
      <CanvasText $x={917} $y={134.5}>2</CanvasText>
      <CanvasText $x={757.5} $y={187}>3</CanvasText>
      <ScrollThumb />
    </Canvas>
  );
}

function Inspector() {
  return (
    <RightPanel>
      <PanelTabs>
        <PanelTab $on>Design</PanelTab>
        <PanelTab>Prototype</PanelTab>
        <PanelTab>Inspect</PanelTab>
      </PanelTabs>
      <PropSection $h={73}>
        <SectionHead>Background</SectionHead>
        <FillRow>
          <Swatch />
          <HexValue>FAEBD7</HexValue>
          <FillAlpha>100%</FillAlpha>
          <Eye />
        </FillRow>
      </PropSection>
      <PropSection $h={44}>
        <SectionHead $muted>Export<Plus c="#b5b5b5" /></SectionHead>
      </PropSection>
      <HelpButton>?</HelpButton>
    </RightPanel>
  );
}

function WindowsTaskbar() {
  return (
    <Taskbar>
      <StartButton><WinLogo /></StartButton>
      <SearchBox>
        <svg width="17" height="17" viewBox="0 0 17 17" fill="none" stroke="#111" strokeWidth="1.300"><circle cx="10.500" cy="6" r="5.300" /><path d="M6.700 9.800L.6 16" /></svg>
        <Text $ls={-0.5}>Type here to search</Text>
      </SearchBox>
      <TaskCell $w={48}><svg width="16" height="16" viewBox="0 0 16 16"><circle cx="8" cy="8" r="6.800" fill="none" stroke="#000" strokeWidth="2" /></svg></TaskCell>
      <TaskCell $w={48} $mr={2.5}><TaskView /></TaskCell>
      <TaskCell $open><Explorer /></TaskCell>
      <TaskCell><Edge /></TaskCell>
      <TaskCell><OfficeIcon c="#d14424" letter="P" /></TaskCell>
      <TaskCell $open><OfficeIcon c="#2a5699" letter="W" /></TaskCell>
      <TaskCell $mr={0.5}><Firefox /></TaskCell>
      <TaskCell $open $focus $w={48} $mr={1}><ChromeIcon /></TaskCell>
      <TaskCell $open><Xampp s={24} /></TaskCell>
      <TaskCell $open><VsCode /></TaskCell>
      <Tray>
        <TraySlot $w={54}><HelpBadge /></TraySlot>
        <TraySlot $w={30}><Weather /></TraySlot>
        <TraySlot $w={47} $fs={14}><Text $ls={-0.55}>24°C</Text></TraySlot>
        <TraySlot $w={25}><TrayCaret /></TraySlot>
        <TraySlot $w={22}><MeetNow /></TraySlot>
        <TraySlot $w={23}><Battery /></TraySlot>
        <TraySlot $w={28}><Speaker /></TraySlot>
        <TraySlot $w={32}><Text $ls={-0.3}>IND</Text></TraySlot>
        <Clock>18:37<br />03/01/2022</Clock>
        <NoticeSlot><ActionCenter /></NoticeSlot>
        <ShowDesktop />
      </Tray>
    </Taskbar>
  );
}

export default function App() {
  return (
    <Screen>
      <GlobalStyle />
      <BrowserChrome />
      <EditorToolbar />
      <Workspace>
        <Layers />
        <Board />
        <Inspector />
      </Workspace>
      <WindowsTaskbar />
    </Screen>
  );
}
